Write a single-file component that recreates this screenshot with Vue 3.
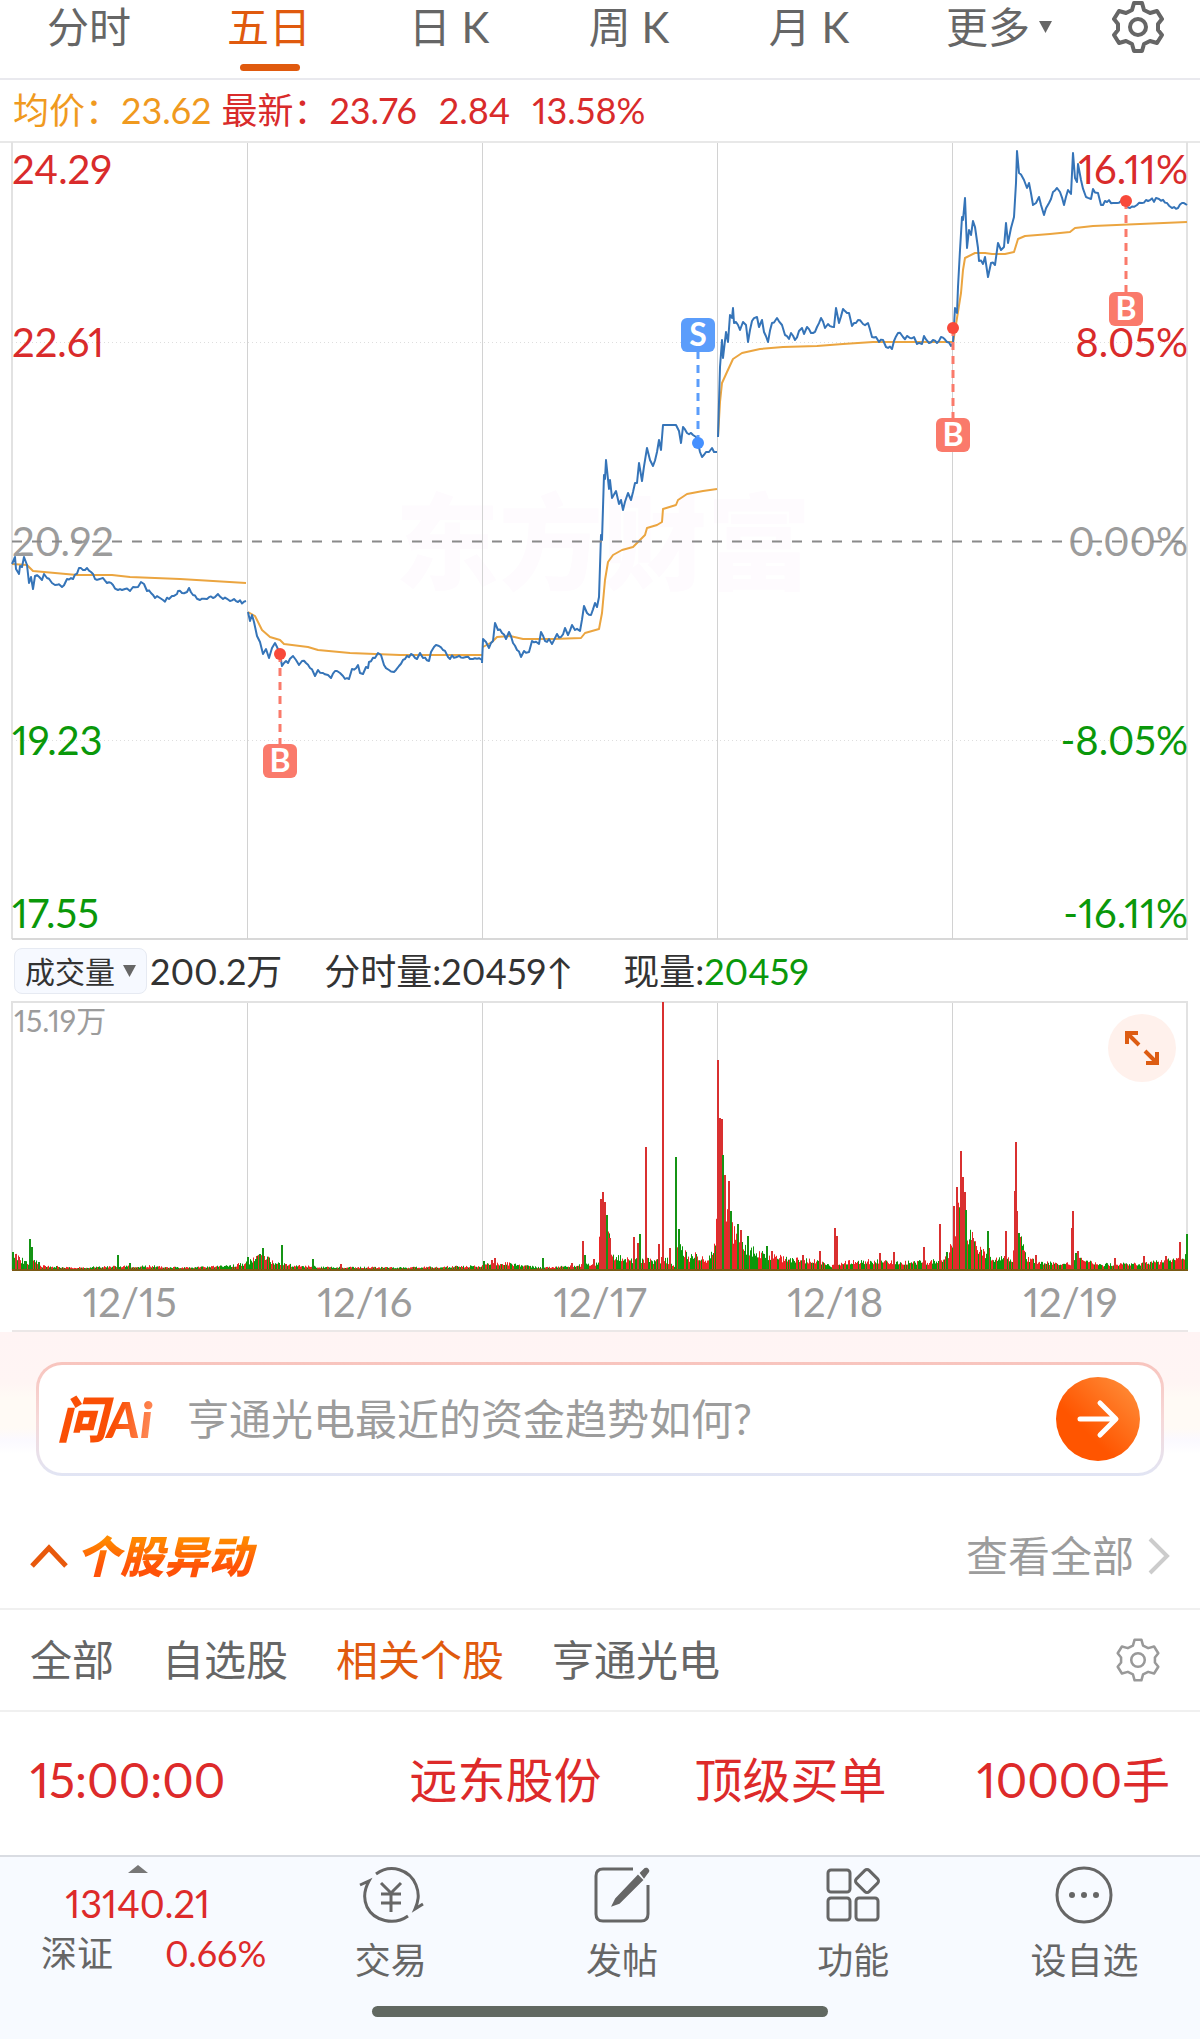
<template>
  <main class="page">
    <nav class="period" aria-label="周期">
      <button
        v-for="p in periods"
        :key="p"
        type="button"
        class="period-tab"
        :class="{ active: p === period }"
        @click="period = p"
      >{{ p }}</button>
      <div class="period-more">
        <select v-model="more" class="more-select" aria-label="更多">
          <option>更多</option>
        </select>
        <svg class="caret" viewBox="0 0 13 12" aria-hidden="true"><path d="M0 0H13L6.5 12Z" /></svg>
      </div>
      <button type="button" class="icon-btn period-gear" aria-label="设置">
        <svg width="52" height="52" viewBox="0 0 52 52" aria-hidden="true">
          <path :d="gearPath" fill="none" stroke="#666" stroke-width="4" stroke-linejoin="round" />
          <circle cx="26" cy="26" r="8" fill="none" stroke="#666" stroke-width="4" />
        </svg>
      </button>
    </nav>

    <div class="quote">
      <span class="avg">均价：23.62</span>
      <span>最新：23.76</span>
      <span class="change">2.84</span>
      <span>13.58%</span>
    </div>

    <!-- 五日分时图 -->
    <svg class="chart" viewBox="0 0 1200 802" role="img" aria-label="五日分时走势">
      <text x="395" y="442" class="watermark">东方财富</text>
      <path d="M0 2H1200" stroke="#e8e8e8" stroke-width="2" />
      <path d="M12 2V799M1187 2V799" stroke="#e2e2e2" stroke-width="2" />
      <path d="M12 799H1188" stroke="#d8d8d8" stroke-width="2" />
      <path d="M247.5 3V799M482.5 3V799M717.5 3V799M952.5 3V799" stroke="#d2d2d2" />
      <path d="M12 202.5H1187M12 600.5H1187" stroke="#dedede" stroke-dasharray="1 3" />

      <polyline v-for="(d, i) in avgLines" :key="'a' + i" :points="d" class="line line-avg" />
      <polyline v-for="(d, i) in priceLines" :key="'p' + i" :points="noisy(d)" class="line line-price" />

      <g v-for="a in axis" :key="a.price">
        <text x="12" :y="a.y" class="axis" :fill="a.color">{{ a.price }}</text>
        <text x="1188" :y="a.y" class="axis" :fill="a.color" text-anchor="end">{{ a.pct }}</text>
      </g>
      <path d="M12 401.5H1187" stroke="#8a8a8a" stroke-width="2" stroke-dasharray="10 10" />

      <g v-for="m in marks" :key="m.x" :fill="m.color">
        <path
          :d="`M${m.x} ${m.dot}V${m.box > m.dot ? m.box : m.box + 34}`"
          :stroke="m.color"
          stroke-width="3"
          stroke-dasharray="8 6"
        />
        <circle :cx="m.x" :cy="m.dot" r="6" :fill="m.dotColor" />
        <rect :x="m.x - 17" :y="m.box" width="34" height="34" rx="6" />
        <text :x="m.x" :y="m.box + 28" class="mark">{{ m.label }}</text>
      </g>
    </svg>

    <div class="vol-head">
      <div class="vol-pick">
        <select v-model="indicator" class="vol-select" aria-label="指标">
          <option>成交量</option>
        </select>
        <svg class="caret" viewBox="0 0 13 12" aria-hidden="true"><path d="M0 0H13L6.5 12Z" /></svg>
      </div>
      <span class="vol-total">200.2万</span>
      <span class="vol-minute">分时量:20459↑</span>
      <span>现量:<b class="down">20459</b></span>
    </div>

    <div class="vol-wrap">
      <svg class="chart" viewBox="0 0 1200 272" role="img" aria-label="成交量">
        <path d="M12 270V2H1187V270" fill="none" stroke="#e2e2e2" stroke-width="2" />
        <path d="M247.5 3V270M482.5 3V270M717.5 3V270M952.5 3V270" stroke="#d2d2d2" />
        <path :d="bars.up" stroke="#ee2626" />
        <path :d="bars.down" stroke="#0a980a" />
        <path :d="spikes.up" stroke="#d93030" stroke-width="2" />
        <path :d="spikes.down" stroke="#159415" stroke-width="2" />
        <path d="M12 270H1188" stroke="#7a5a14" stroke-width="2" />
        <text x="14" y="32" class="vol-max">15.19万</text>
      </svg>
      <button type="button" class="expand" aria-label="全屏">
        <svg width="36" height="36" viewBox="0 0 36 36" fill="none" stroke="#dd5c12" stroke-width="4" aria-hidden="true">
          <path d="M3 14V3H14M3 3L15 15M33 22V33H22M33 33L21 21" />
        </svg>
      </button>
    </div>

    <div class="dates">
      <span v-for="d in dates" :key="d">{{ d }}</span>
    </div>

    <section class="ai">
      <form class="ai-box" @submit.prevent>
        <label for="ask" class="ai-logo">问Ai</label>
        <input id="ask" v-model="question" class="ai-input" type="text" placeholder="亨通光电最近的资金趋势如何?" />
        <button type="submit" class="ai-send" aria-label="发送">
          <svg width="44" height="40" viewBox="0 0 44 40" fill="none" stroke="#fff" stroke-width="5" stroke-linecap="round" stroke-linejoin="round" aria-hidden="true">
            <path d="M4 20H39M24 4L40 20L24 36" />
          </svg>
        </button>
      </form>
    </section>

    <section>
      <header class="move-head">
        <svg width="38" height="24" viewBox="0 0 38 24" fill="none" stroke="#e8590c" stroke-width="5" aria-hidden="true">
          <path d="M2 22L19 4L36 22" />
        </svg>
        <h2 class="move-title">个股异动</h2>
        <a href="#" class="move-all">
          查看全部
          <svg width="22" height="38" viewBox="0 0 22 38" fill="none" stroke="#ccc" stroke-width="4" aria-hidden="true">
            <path d="M2 2L19 19L2 36" />
          </svg>
        </a>
      </header>

      <div class="filters">
        <button
          v-for="f in filters"
          :key="f"
          type="button"
          class="filter"
          :class="{ active: f === filter }"
          @click="filter = f"
        >{{ f }}</button>
        <button type="button" class="icon-btn filter-gear" aria-label="筛选设置">
          <svg width="44" height="44" viewBox="0 0 52 52" aria-hidden="true">
            <path :d="gearPath" fill="none" stroke="#999" stroke-width="3" stroke-linejoin="round" />
            <circle cx="26" cy="26" r="8" fill="none" stroke="#999" stroke-width="3" />
          </svg>
        </button>
      </div>

      <div class="alert">
        <span>15:00:00</span>
        <span>远东股份</span>
        <span>顶级买单</span>
        <span>10000手</span>
      </div>
    </section>

    <footer class="dock">
      <div class="dock-row">
        <a href="#" class="index">
          <svg width="20" height="8" viewBox="0 0 20 8" aria-hidden="true"><path d="M0 8L10 0L20 8Z" fill="#777" /></svg>
          <span class="index-value">13140.21</span>
          <span class="index-line"><span class="index-name">深证</span><span>0.66%</span></span>
        </a>
        <a href="#" class="dock-item">
          <svg class="dock-icon" viewBox="0 0 66 58" aria-hidden="true">
            <path d="M18 8C33 -3 52 4 58 19C62 29 60 36 57 43L65 38" />
            <path d="M50 50C36 60 16 55 9 41C5 32 6 24 11 15L2 19" />
            <path d="M23 17L33 27L43 17M23 28H43M23 37H43M33 27V46" />
          </svg>
          交易
        </a>
        <a href="#" class="dock-item">
          <svg class="dock-icon" viewBox="0 0 66 58" aria-hidden="true">
            <path d="M44 3H14Q7 3 7 10V48Q7 55 14 55H52Q59 55 59 48V19" />
            <path d="M49 10L53 14L30 37L24 39L27 33ZM52 7L56 3Q58 2 59 4Q60 5 58 7L55 11Z" fill="#666" stroke-width="2" />
          </svg>
          发帖
        </a>
        <a href="#" class="dock-item">
          <svg class="dock-icon" viewBox="0 0 66 58" aria-hidden="true">
            <rect x="8" y="4" width="22" height="22" rx="3" />
            <rect x="8" y="32" width="22" height="22" rx="3" />
            <rect x="36" y="32" width="22" height="22" rx="3" />
            <rect x="38" y="6" width="18" height="18" rx="3" transform="rotate(45 47 15)" />
          </svg>
          功能
        </a>
        <a href="#" class="dock-item">
          <svg class="dock-icon" viewBox="0 0 66 58" aria-hidden="true">
            <circle cx="33" cy="29" r="27" />
            <g fill="#666" stroke="none">
              <circle cx="21" cy="29" r="3" />
              <circle cx="33" cy="29" r="3" />
              <circle cx="45" cy="29" r="3" />
            </g>
          </svg>
          设自选
        </a>
      </div>
      <div class="home-bar"></div>
    </footer>
  </main>
</template>

<script setup>
import { ref } from 'vue';

const periods = ['分时', '五日', '日 K', '周 K', '月 K'];
const period = ref('五日');
const more = ref('更多');
const indicator = ref('成交量');
const question = ref('');
const filters = ['全部', '自选股', '相关个股', '亨通光电'];
const filter = ref('相关个股');
const dates = ['12/15', '12/16', '12/17', '12/18', '12/19'];

const gearPath =
  'M22 2H30L32 9L38 12L45 10L50 18L46 23V29L50 34L45 42L38 40L32 43L30 50H22L20 43L14 40L7 42L2 34L6 29V23L2 18L7 10L14 12L20 9Z';

const axis = [
  { price: '24.29', pct: '16.11%', y: 44, color: '#d92b2b' },
  { price: '22.61', pct: '8.05%', y: 217, color: '#d92b2b' },
  { price: '20.92', pct: '0.00%', y: 416, color: '#9c9c9c' },
  { price: '19.23', pct: '-8.05%', y: 615, color: '#0a980a' },
  { price: '17.55', pct: '-16.11%', y: 788, color: '#0a980a' },
];

// 买卖点
const marks = [
  { label: 'B', x: 280, dot: 514, box: 604, color: '#fa7a6b', dotColor: '#f8493a' },
  { label: 'S', x: 698, dot: 303, box: 178, color: '#5b9dfb', dotColor: '#4590ff' },
  { label: 'B', x: 953, dot: 188, box: 278, color: '#fa7a6b', dotColor: '#f8493a' },
  { label: 'B', x: 1126, dot: 61, box: 152, color: '#fa7a6b', dotColor: '#f8493a' },
];

const priceLines = [
  '12,424 15,417 16,429 19,434 20,426 22,427 24,417 27,425 29,443 31,437 33,449 35,436 42,440 44,434 47,438 52,443 55,445 62,447 67,439 73,439 79,428 87,428 91,432 95,439 103,438 107,443 113,445 118,450 125,449 130,451 133,447 138,447 141,442 144,444 147,451 151,453 155,458 160,458 163,460 169,459 172,456 177,454 178,451 182,453 187,452 189,448 193,455 200,460 207,459 213,458 218,454 223,459 230,461 234,459 238,462 246,461',
  '248,472 250,481 252,475 254,482 257,496 260,502 263,514 266,509 269,518 272,508 275,503 277,507 280,514 282,526 284,523 288,523 293,516 296,520 299,525 302,521 306,523 310,528 315,536 318,530 323,533 328,535 331,538 335,531 340,533 343,536 349,539 352,529 358,525 360,533 363,534 366,527 368,528 369,522 375,518 378,513 381,515 384,525 389,530 394,532 399,526 405,519 411,514 417,519 420,513 423,518 429,521 431,512 434,507 439,506 443,510 448,517 457,517 466,517 473,519 482,520',
  '482,523 483,499 486,502 489,508 491,503 493,501 495,483 498,490 502,493 506,499 509,492 513,503 517,510 521,517 524,511 529,512 532,501 539,504 541,492 545,501 549,499 552,504 557,494 561,497 565,488 568,495 572,485 575,490 580,491 584,466 587,473 591,475 595,463 597,467 599,457 601,395 602,400 604,335 605,339 606,320 609,349 610,340 612,358 616,351 619,364 621,360 623,370 628,353 631,360 633,352 635,343 637,343 639,323 642,341 647,308 650,320 653,326 657,312 659,300 661,310 663,285 676,285 679,291 681,303 683,287 687,293 693,295 696,297 698,303 700,312 702,317 706,312 709,312 712,308 714,312 717,312',
  '718,297 720,227 722,200 723,218 726,192 728,202 730,175 732,178 733,168 734,183 738,185 740,190 743,182 746,185 748,202 752,181 757,177 759,187 762,180 764,192 768,202 772,183 777,178 782,185 785,195 789,199 791,193 795,200 799,191 802,188 804,194 807,187 813,193 817,187 821,178 825,188 828,184 834,187 836,168 839,183 843,169 847,173 849,173 852,186 856,183 858,180 863,184 868,183 872,197 876,197 879,202 883,200 886,207 892,209 894,201 898,193 903,197 910,198 914,197 917,204 922,204 924,196 929,203 933,200 937,203 941,197 947,202 951,206 953,203',
  '953,203 955,168 957,173 958,147 960,110 962,77 963,80 965,58 967,108 969,90 971,95 973,81 975,87 978,108 979,121 983,124 985,117 988,137 991,123 995,125 998,103 1001,110 1004,107 1006,83 1008,103 1011,88 1014,77 1016,43 1017,11 1019,33 1024,40 1027,48 1029,43 1033,65 1036,63 1039,57 1041,65 1044,75 1049,63 1053,52 1057,48 1060,52 1064,65 1068,50 1071,54 1073,13 1075,38 1077,42 1078,24 1081,40 1086,57 1091,59 1093,49 1098,53 1101,65 1105,61 1117,63 1123,62 1130,68 1137,65 1142,63 1148,61 1159,59 1167,63 1172,68 1178,68 1182,63 1187,65',
];

const avgLines = [
  '12,424 27,425 33,431 55,433 77,435 112,435 130,437 180,439 246,443',
  '248,472 255,476 258,482 262,490 270,497 280,500 284,504 308,507 318,510 350,513 400,515 482,515',
  '483,507 492,502 497,497 510,496 523,499 553,499 581,498 585,493 599,489 602,473 605,440 608,422 613,415 622,410 633,407 642,398 645,395 647,388 657,385 662,382 663,369 676,365 678,360 687,354 703,351 717,349',
  '718,297 720,262 722,243 727,232 733,219 742,213 760,209 783,207 817,206 843,204 873,202 953,202',
  '953,203 957,178 961,153 963,130 965,118 975,113 985,113 992,114 1005,114 1014,112 1018,99 1025,96 1050,94 1070,92 1075,88 1093,86 1187,82',
];

// 固定种子的伪随机数，保证每次绘制一致
const seeded = (seed) => () => {
  seed = (seed * 16807) % 2147483647;
  return seed / 2147483647;
};

// 在较平缓的线段中补上逐分钟的小波动
const noisy = (points) => {
  const rand = seeded(77);
  const pts = points.split(' ').map((p) => p.split(',').map(Number));
  const out = [pts[0]];
  for (let i = 1; i < pts.length; i++) {
    const [x0, y0] = pts[i - 1];
    const [x1, y1] = pts[i];
    const flat = y0 === 285 && y1 === 285;
    for (let x = x0 + 2; x < x1 - 1 && !flat; x += 2) {
      out.push([x, y0 + ((y1 - y0) * (x - x0)) / (x1 - x0) + (rand() - 0.5) * 4]);
    }
    out.push(pts[i]);
  }
  return out.map((p) => p.join(',')).join(' ');
};

// 成交量整体轮廓 [x, 高度]
const envelope = [
  [12, 20], [20, 14], [27, 8], [34, 12], [40, 5], [60, 4], [75, 3], [100, 4], [150, 5], [180, 3], [230, 5], [247, 9],
  [262, 18], [275, 8], [300, 5], [320, 4], [400, 3], [480, 5], [494, 9], [515, 7], [540, 3], [575, 5], [590, 8],
  [598, 8], [600, 60], [603, 75], [607, 55], [612, 20], [630, 13], [645, 13], [655, 10], [664, 15], [674, 6], [678, 38],
  [688, 14], [695, 20], [705, 12], [713, 22], [717, 70], [719, 160], [722, 120], [726, 72], [733, 50], [745, 30],
  [755, 23], [770, 17], [800, 12], [820, 11], [830, 5], [850, 11], [870, 11], [900, 10], [930, 10], [946, 18], [952, 30],
  [956, 75], [963, 90], [968, 45], [980, 27], [992, 15], [1012, 15], [1015, 60], [1019, 42], [1026, 17], [1040, 9],
  [1070, 8], [1080, 13], [1100, 7], [1140, 8], [1165, 11], [1187, 17],
];

const bars = { up: '', down: '' };
const rand = seeded(2024);
for (let i = 1; i < envelope.length; i++) {
  const [x0, h0] = envelope[i - 1];
  const [x1, h1] = envelope[i];
  for (let x = x0; x < x1; x++) {
    const h = (h0 + ((h1 - h0) * (x - x0)) / (x1 - x0)) * (0.5 + 0.5 * rand());
    bars[rand() > 0.5 ? 'up' : 'down'] += `M${x + 0.5} 270v-${h.toFixed(1)}`;
  }
}

// 单独的放量柱
const toPath = (list) => list.map(([x, h]) => `M${x} 270v-${h}`).join('');
const spikes = {
  up: toPath([
    [16, 16], [19, 13], [266, 10], [286, 6], [341, 6], [492, 10], [495, 12], [572, 7], [583, 29], [594, 11], [601, 71],
    [603, 78], [605, 68], [610, 32], [634, 33], [638, 27], [646, 123], [659, 26], [663, 268], [670, 22], [718, 210],
    [720, 152], [722, 151], [725, 95], [729, 89], [741, 40], [772, 19], [803, 15], [820, 19], [835, 42], [837, 34],
    [880, 17], [894, 18], [924, 23], [940, 46], [954, 64], [957, 83], [961, 119], [963, 93], [965, 78], [973, 32],
    [989, 22], [1006, 39], [1015, 79], [1016, 128], [1017, 59], [1023, 20], [1036, 15], [1072, 42], [1073, 59],
    [1078, 19], [1115, 12], [1144, 14], [1166, 14], [1180, 28],
  ]),
  down: toPath([
    [13, 18], [25, 9], [30, 31], [32, 23], [39, 8], [118, 15], [130, 7], [248, 13], [256, 11], [263, 22], [260, 16],
    [282, 25], [313, 11], [484, 9], [543, 12], [585, 15], [607, 55], [640, 36], [676, 113], [679, 41], [723, 115],
    [731, 59], [738, 46], [748, 34], [767, 24], [947, 18], [966, 60], [988, 39], [1019, 37], [1076, 17], [1187, 36],
  ]),
};
</script>

<style>
body { background: #fff; }
</style>

<style scoped>
.page {
  min-height: 100vh; display: flex; flex-direction: column; background: #fff; color: #333;
  font-family: Lato, "Noto Sans CJK SC", sans-serif; font-size: 36px; line-height: 48px;
  font-variant-numeric: proportional-nums;
}
.page *, .page { box-sizing: border-box; }
button, select, input { font-family: inherit; margin: 0; padding: 0; border: 0; background: none; color: inherit; }
button, select { cursor: pointer; }
select { appearance: none; outline: none; }
a { color: inherit; text-decoration: none; }
svg { display: block; flex: none; }
.icon-btn { display: flex; align-items: center; }
.caret { width: 13px; height: 12px; fill: #666; pointer-events: none; }

/* 周期切换 */
.period { display: grid; grid-template-columns: repeat(5, 15fr) 16.5fr 8.5fr; height: 80px; border-bottom: 2px solid #e9e9ee; }
.period-tab { position: relative; height: 72px; padding: 0 2px 18px 0; font-size: 42px; line-height: 54px; color: #666; }
.period-tab.active { color: #e05a0e; }
.period-tab.active::after {
  content: ""; position: absolute; left: 50%; bottom: 1px; width: 60px; height: 7px;
  margin-left: -30px; border-radius: 4px; background: #e05a0e;
}
.period-more { display: flex; align-items: center; justify-content: center; gap: 8px; height: 54px; color: #666; }
.more-select { height: 54px; font-size: 42px; }
.period-gear { height: 54px; padding-left: 14px; }

.quote { display: flex; height: 60px; padding: 6px 13px; color: #d92b2b; white-space: nowrap; }
.avg { color: #f09a1f; margin-right: 10px; }
.change { margin: 0 22px; }

/* 图表 */
.chart { width: 100%; height: auto; }
.watermark { font-size: 104px; font-weight: 900; fill: #fefbfe; }
.line { fill: none; stroke-linejoin: round; }
.line-price { stroke: #3574b8; stroke-width: 2; }
.line-avg { stroke: #eba540; stroke-width: 2; }
.axis { font-size: 40px; }
.mark { font-size: 32px; font-weight: 700; text-anchor: middle; fill: #fff; }
.vol-max { font-size: 30px; fill: #9c9c9c; }

.vol-head { display: flex; align-items: center; height: 58px; padding: 0 14px; white-space: nowrap; }
.vol-pick {
  display: flex; align-items: center; gap: 8px; height: 46px; padding: 0 10px;
  border: 1px solid #e6eaf2; border-radius: 8px; background: #f6f9ff;
}
.vol-select { height: 44px; font-size: 30px; }
.vol-total { margin: 0 42px 0 3px; }
.vol-minute { margin-right: 50px; }
.down { font-weight: 400; color: #0a980a; }
.vol-wrap { position: relative; }
.expand {
  position: absolute; top: 14px; right: 24px; width: 68px; height: 68px; border-radius: 50%;
  display: flex; align-items: center; justify-content: center; background: #fff1ec;
}
.dates {
  display: grid; grid-template-columns: repeat(5, 1fr); height: 60px; margin: 0 12px; padding-top: 6px;
  border-bottom: 2px solid #ebe7e7; text-align: center; font-size: 40px; color: #9c9c9c;
}

/* 问Ai */
.ai { padding: 30px 36px 0; background: linear-gradient(#fff4f4 0, #fff5f4 50px, #fffaf5 66px, #fffaf5 96px, #fbf9ff 108px, #fff 122px); }
.ai-box {
  display: flex; align-items: center; height: 114px; padding: 0 21px 0 18px; border: 3px solid transparent; border-radius: 26px;
  background: linear-gradient(#fff, #fff) padding-box, linear-gradient(#f8c4bd, #f6d8d8 50%, #e1e5f4) border-box;
}
.ai-logo {
  width: 130px; font-size: 50px; font-weight: 900; font-style: italic;
  background: linear-gradient(100deg, #fa4f05 45%, #ff9a70 80%); background-clip: text; color: transparent;
}
.ai-input { flex: 1; min-width: 0; height: 60px; font-size: 42px; outline: none; }
.ai-input::placeholder { color: #9c9c9c; opacity: 1; }
.ai-send {
  width: 84px; height: 84px; border-radius: 50%; display: flex; align-items: center; justify-content: center;
  background: linear-gradient(45deg, #ff5500 35%, #ff9440);
}

/* 个股异动 */
.move-head {
  display: flex; align-items: center; height: 134px; padding: 28px 30px 0; border-bottom: 2px solid #f0f0f0;
}
.move-title {
  margin: 0 auto 0 8px; padding-right: 8px; font-size: 44px; line-height: 56px; font-weight: 900; font-style: italic;
  background: linear-gradient(#ff8a00 20%, #ff5208 70%); background-clip: text; color: transparent;
}
.move-all { display: flex; align-items: center; gap: 14px; font-size: 42px; color: #9c9c9c; }
.filters { display: flex; align-items: center; gap: 48px; height: 102px; padding: 0 40px 0 30px; border-bottom: 2px solid #f0f0f0; }
.filter { font-size: 42px; line-height: 56px; color: #666; }
.filter.active { color: #e05a0e; }
.filter-gear { margin-left: auto; }
.alert {
  display: grid; grid-template-columns: 33.3% 25% 1fr auto; align-items: center; height: 143px; padding: 0 30px 8px;
  font-size: 48px; line-height: 64px; color: #dd2a2a; white-space: nowrap;
}

/* 底部导航 */
.dock { margin-top: auto; height: 184px; border-top: 2px solid #d9dce2; background: #f7faff; color: #666; }
.dock-row { display: grid; grid-template-columns: 275fr repeat(4, 231fr); height: 149px; }
.index { display: flex; flex-direction: column; align-items: center; padding-top: 8px; }
.index-value { margin-top: 6px; font-size: 38px; color: #dd2a2a; }
.index-line { display: flex; gap: 52px; margin-top: 2px; padding-left: 32px; color: #dd2a2a; }
.index-name { color: #666; }
.dock-item { display: flex; flex-direction: column; align-items: center; gap: 12px; padding-top: 9px; }
.dock-icon { width: 66px; height: 58px; fill: none; stroke: #666; stroke-width: 3; }
.home-bar { width: 38%; height: 11px; margin: 0 auto; border-radius: 6px; background: #616861; }
</style>
